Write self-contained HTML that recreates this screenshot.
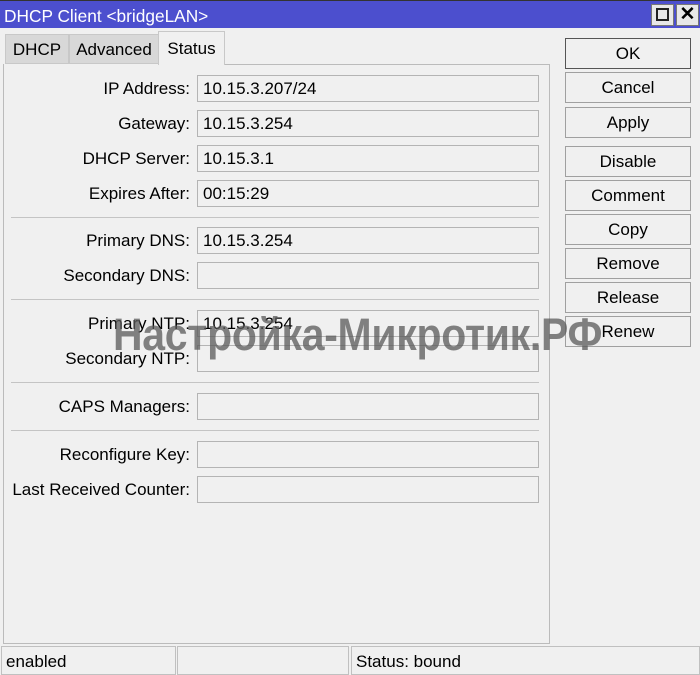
<!DOCTYPE html><html><head><style>
*{box-sizing:border-box;margin:0;padding:0}
body{width:700px;height:675px;background:#f0f0f0;font-family:"Liberation Sans",sans-serif;font-size:17px;color:#000;position:relative;overflow:hidden}
.a{position:absolute}
.title{left:0;top:0;width:700px;height:28px;background:#4c4fce;color:#fff;padding:5px 0 0 4px;font-size:17.3px;border-top:1px solid #333}
.wb{top:4px;width:23px;height:22px;background:#e8e8e8;border:1px solid #777}
.tab{top:34px;height:30px;background:#d8d8d8;border:1px solid #c8c8c8;padding:5px 0 0 0;text-align:center}
.panel{left:3px;top:64px;width:547px;height:580px;border:1px solid #bbb;border-top:none}
.lbl{right:510px;text-align:right;white-space:nowrap}
.in{left:197px;width:342px;height:27px;border:1px solid #b4b4b4;padding:3px 0 0 5px}
.sep{left:11px;width:528px;height:1px;background:#c4c4c4}
.btn{left:565px;width:126px;height:31px;border:1px solid #a0a0a0;background:#f0f0f0;text-align:center;padding-top:5px}
.sb{top:646px;height:29px;border:1px solid #c0c0c0;padding:5px 0 0 4px}
.wm{left:113px;top:309px;font-size:45px;font-weight:bold;color:rgba(90,90,90,0.75);letter-spacing:-0.3px;transform:scaleX(0.91);transform-origin:left;white-space:nowrap}
</style></head><body>
<div class="a title">DHCP Client &lt;bridgeLAN&gt;</div>
<div class="a wb" style="left:651px"><div class="a" style="left:4px;top:3px;width:13px;height:13px;border:2px solid #222"></div></div>
<div class="a wb" style="left:676px;font-size:19px;font-weight:bold;text-align:center;line-height:19px">✕</div>
<div class="a tab" style="left:5px;width:64px">DHCP</div>
<div class="a tab" style="left:69px;width:90px">Advanced</div>
<div class="a tab" style="left:158px;top:31px;height:34px;width:67px;background:#f0f0f0;border-bottom:none;padding-top:7px">Status</div>
<div class="a" style="left:225px;top:64px;width:325px;height:1px;background:#bbb"></div>
<div class="a panel"></div>

<div class="a lbl" style="top:79px">IP Address:</div><div class="a in" style="top:75px">10.15.3.207/24</div>
<div class="a lbl" style="top:114px">Gateway:</div><div class="a in" style="top:110px">10.15.3.254</div>
<div class="a lbl" style="top:149px">DHCP Server:</div><div class="a in" style="top:145px">10.15.3.1</div>
<div class="a lbl" style="top:184px">Expires After:</div><div class="a in" style="top:180px">00:15:29</div>
<div class="a sep" style="top:217px"></div>
<div class="a lbl" style="top:231px">Primary DNS:</div><div class="a in" style="top:227px">10.15.3.254</div>
<div class="a lbl" style="top:266px">Secondary DNS:</div><div class="a in" style="top:262px"></div>
<div class="a sep" style="top:299px"></div>
<div class="a lbl" style="top:314px">Primary NTP:</div><div class="a in" style="top:310px">10.15.3.254</div>
<div class="a lbl" style="top:349px">Secondary NTP:</div><div class="a in" style="top:345px"></div>
<div class="a sep" style="top:382px"></div>
<div class="a lbl" style="top:397px">CAPS Managers:</div><div class="a in" style="top:393px"></div>
<div class="a sep" style="top:430px"></div>
<div class="a lbl" style="top:445px">Reconfigure Key:</div><div class="a in" style="top:441px"></div>
<div class="a lbl" style="top:480px">Last Received Counter:</div><div class="a in" style="top:476px"></div>

<div class="a btn" style="top:38px;border-color:#555">OK</div>
<div class="a btn" style="top:72px">Cancel</div>
<div class="a btn" style="top:107px">Apply</div>
<div class="a btn" style="top:146px">Disable</div>
<div class="a btn" style="top:180px">Comment</div>
<div class="a btn" style="top:214px">Copy</div>
<div class="a btn" style="top:248px">Remove</div>
<div class="a btn" style="top:282px">Release</div>
<div class="a btn" style="top:316px">Renew</div>

<div class="a wm">Настройка-Микротик.РФ</div>

<div class="a sb" style="left:1px;width:175px">enabled</div>
<div class="a sb" style="left:177px;width:172px"></div>
<div class="a sb" style="left:351px;width:349px">Status: bound</div>
</body></html>
